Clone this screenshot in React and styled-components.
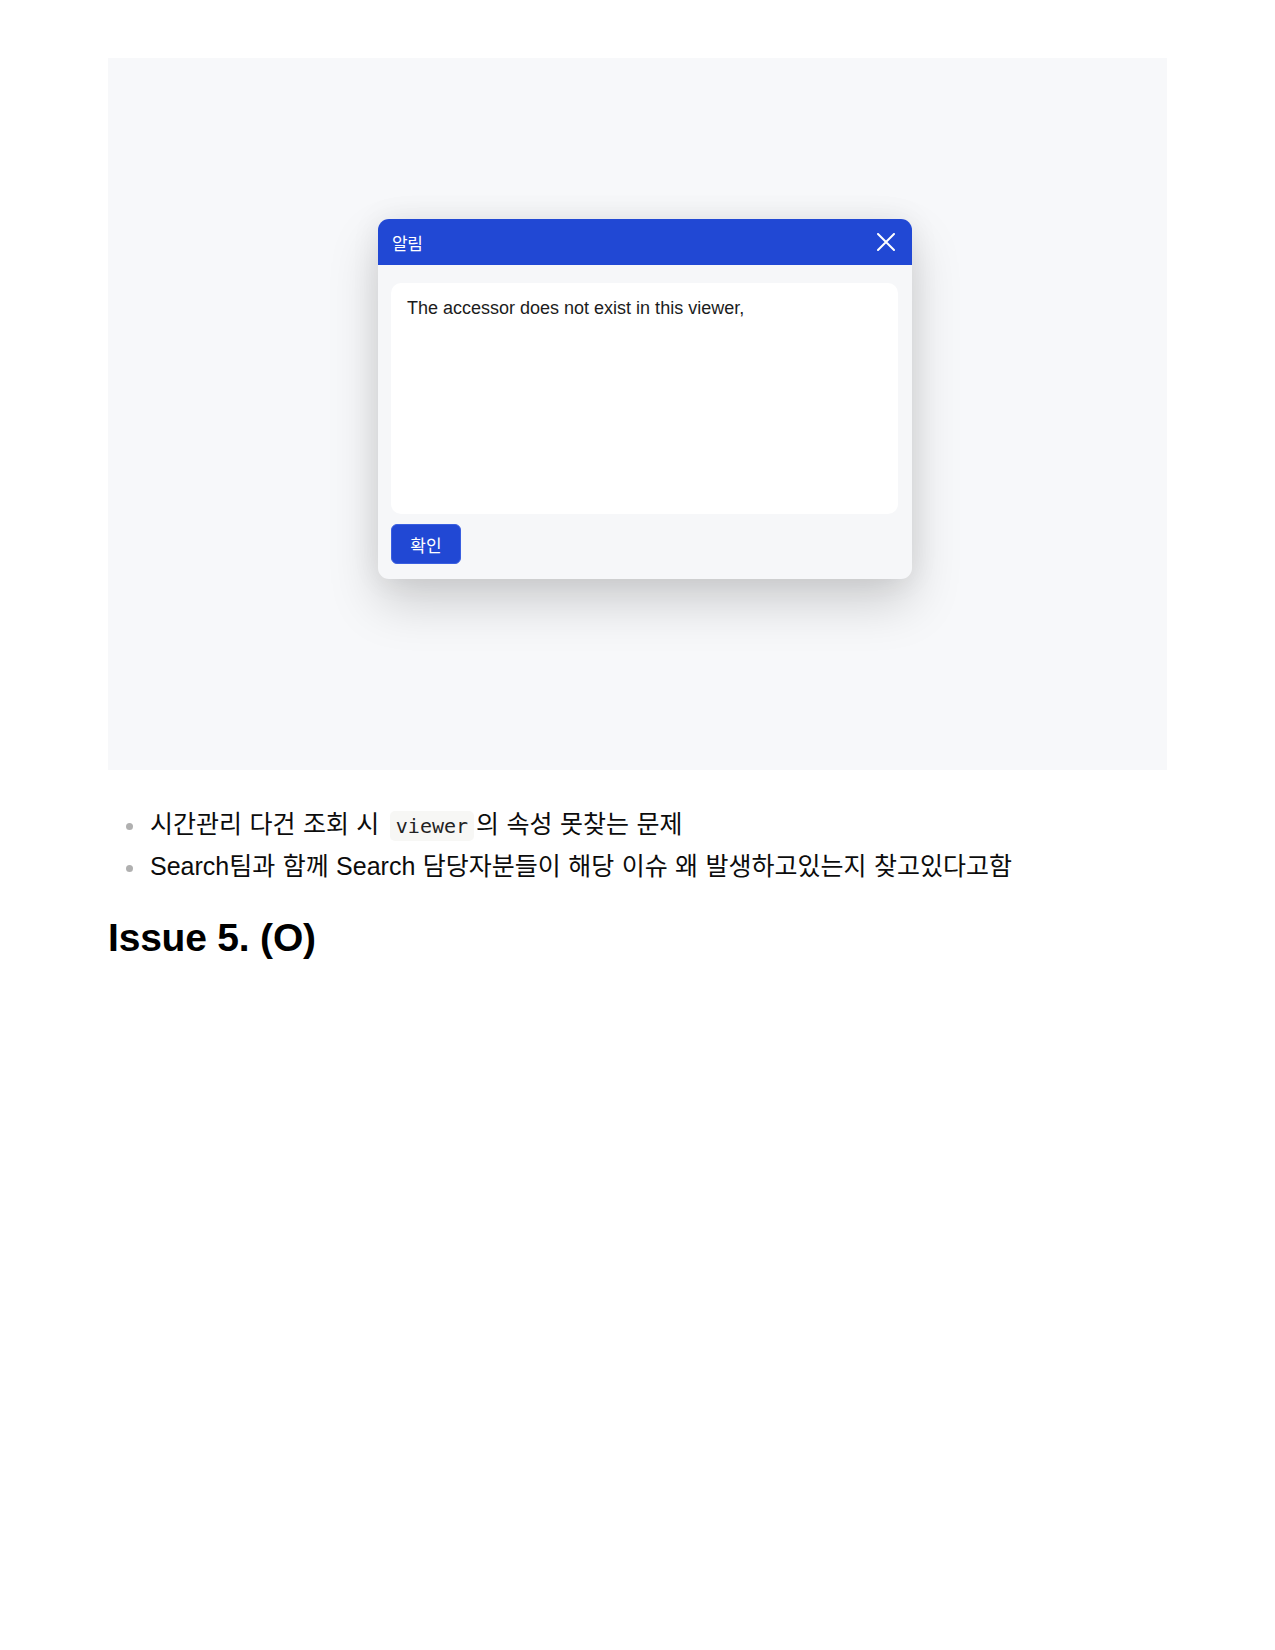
import React from 'react';
import styled, { createGlobalStyle } from 'styled-components';

const GlobalStyle = createGlobalStyle`
  html, body {
    margin: 0;
    padding: 0;
    background: #fff;
  }
  body {
    font-family: 'Liberation Sans', 'Noto Sans CJK KR', sans-serif;
    color: #0c0c0c;
  }
`;

const Page = styled.div`
  padding: 58px 108px 0;
  min-height: 1650px;
  box-sizing: border-box;
`;

const Shot = styled.div`
  height: 712px;
  background: #f7f8fa;
  box-sizing: border-box;
  padding: 161px 0 0 270px;
`;

const Dialog = styled.div`
  width: 534px;
  border-radius: 11px;
  background: #f6f7f9;
  box-shadow: 0 24px 50px rgba(0, 0, 0, 0.17), 0 0 30px rgba(0, 0, 0, 0.07);
  overflow: hidden;
  font-family: 'Noto Sans CJK KR', 'Liberation Sans', sans-serif;
`;

const Header = styled.div`
  height: 46px;
  background: #2148d4;
  display: flex;
  align-items: center;
  justify-content: space-between;
  padding: 0 17px 0 14px;
  color: #fff;
`;

const Title = styled.span`
  font-size: 17px;
  letter-spacing: -0.3px;
`;

const CloseButton = styled.button`
  width: 18px;
  height: 18px;
  padding: 0;
  border: 0;
  background: none;
  display: flex;
  cursor: pointer;
`;

const Body = styled.div`
  padding: 18px 14px 15px 13px;
  display: flex;
  flex-direction: column;
  gap: 10px;
`;

const Message = styled.div`
  height: 231px;
  background: #fff;
  border-radius: 10px;
  box-sizing: border-box;
  padding: 12px 16px;
  font-family: 'Liberation Sans', sans-serif;
  font-size: 18px;
  line-height: 26px;
  color: #1c1c1c;
`;

const ConfirmButton = styled.button`
  align-self: flex-start;
  width: 70px;
  height: 40px;
  border-radius: 6px;
  border: 1px solid #3a5fe0;
  background: #2148d4;
  color: #fff;
  font-family: 'Noto Sans CJK KR', sans-serif;
  font-size: 17px;
  cursor: pointer;
`;

const List = styled.ul`
  list-style: none;
  margin: 34px 0 0;
  padding: 0;
`;

const Item = styled.li`
  display: flex;
  align-items: flex-start;
  padding: 3px 0;
  font-size: 25px;
  line-height: 34px;
  word-spacing: 0.5px;
`;

const Marker = styled.span`
  flex: 0 0 42px;
  height: 34px;
  display: flex;
  align-items: center;
  justify-content: center;

  &::before {
    content: '';
    width: 7px;
    height: 7px;
    border-radius: 50%;
    background: #b0b0b0;
    margin-top: 4px;
  }
`;

const Code = styled.code`
  font-family: 'DejaVu Sans Mono', monospace;
  font-size: 20px;
  word-spacing: 0;
  background: #f7f7f5;
  border-radius: 5px;
  padding: 3px 6px;
  margin: 0 2px 0 3px;
  color: #222;
`;

const Heading = styled.h2`
  margin: 27px 0 0;
  font-size: 39px;
  line-height: 50px;
  font-weight: 700;
  letter-spacing: -0.2px;
  color: #000;
`;

const CloseIcon = () => (
  <svg width="18" height="18" viewBox="0 0 18 18" fill="none">
    <path d="M1 1 L17 17 M17 1 L1 17" stroke="#fff" strokeWidth="2" strokeLinecap="round" />
  </svg>
);

const notes = [
  <>시간관리 다건 조회 시 <Code>viewer</Code>의 속성 못찾는 문제</>,
  <>Search팀과 함께 Search 담당자분들이 해당 이슈 왜 발생하고있는지 찾고있다고함</>,
];

export default function App() {
  return (
    <Page>
      <GlobalStyle />
      <Shot>
        <Dialog>
          <Header>
            <Title>알림</Title>
            <CloseButton aria-label="닫기">
              <CloseIcon />
            </CloseButton>
          </Header>
          <Body>
            <Message>The accessor does not exist in this viewer,</Message>
            <ConfirmButton>확인</ConfirmButton>
          </Body>
        </Dialog>
      </Shot>
      <List>
        {notes.map((note, i) => (
          <Item key={i}>
            <Marker />
            <span>{note}</span>
          </Item>
        ))}
      </List>
      <Heading>Issue 5. (O)</Heading>
    </Page>
  );
}
